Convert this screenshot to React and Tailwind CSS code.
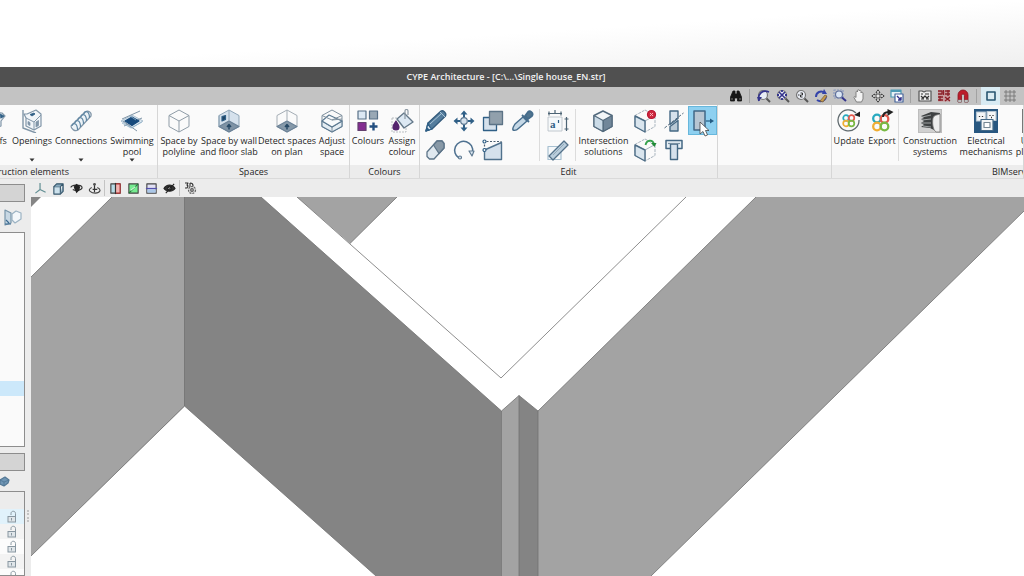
import React from "react";

const N = "#2f5f86";
const G = "#8196a8";
const L = "#d5e1ec";

function Svg({ children, className = "size-6", box = "0 0 24 24" }) {
  return (
    <svg viewBox={box} className={className + " shrink-0"} fill="none" stroke={N} strokeWidth="1.2" strokeLinejoin="round" aria-hidden="true">
      {children}
    </svg>
  );
}

/* ---------- ribbon icons ---------- */
const cube = "M12 1 22 6.500V17.500L12 23 2 17.500V6.500Z";
const cubeIn = "M2 6.500 12 12 22 6.500M12 12V23";

const Roofs = () => (
  <Svg>
    <path d="M2 8 10 3l9 1 3 3-4 5v5l-8 3-8-3Z" fill="#eef3f7" stroke={G} />
    <path d="M10 3l5 7 7-3M15 10v9" stroke={G} />
    <path d="M17 5l4 2-3 2Z" fill={N} strokeWidth=".8" />
  </Svg>
);
const Openings = () => (
  <Svg>
    <path d="M3 1v18l13 5" stroke={G} strokeWidth="1.400" />
    <path d="M4 5h3L16 1l5 4v12l-7 4-8-4V9Z" fill="#f1f5f9" stroke={G} />
    <path d="M6 9l8 4 7-7M14 13v8" stroke={G} strokeWidth="1" />
    <path d="M8 12.500v3l2 1v-3ZM16 13v5l2.500-1.500v-5Z" fill={G} stroke={G} strokeWidth=".8" />
    <path d="M10 5.500l4-1.500 1 1-3 2Z" fill={N} strokeWidth=".8" />
  </Svg>
);
const Connections = () => (
  <Svg>
    <path d="M2 17 16 3c3-2 7 0 6 4L9 21c-3 2-7-1-7-4Z" fill="#edf3f7" stroke={G} />
    {[0, 1, 2, 3, 4].map((i) => (
      <g key={i} transform={`translate(${i * 3} ${-i * 3})`}>
        <path d="M3 17c0-2 2-3 3.500-2s2 3 2 6" stroke="#5f86a3" strokeWidth="1.200" />
      </g>
    ))}
  </Svg>
);
const Pool = () => (
  <Svg>
    <path d="M1 12 12 6l11 6-11 7Z" fill="#dce8f1" stroke="#9cb4c6" strokeWidth=".8" />
    <path d="M2 10 20 2M4 17l18-8M3 12l14 10" stroke={G} strokeWidth="1" />
    <path d="M5 12l7-4 7 4-7 4.500Z" fill="#174a7c" stroke="#174a7c" />
    <path d="M10 7l6 4M2 14l9 5 11-6" stroke="#8fb1c8" strokeWidth=".8" />
  </Svg>
);
const SpacePoly = () => (
  <Svg>
    <path d={cube} fill="#fafafa" stroke="#8f9ca7" strokeWidth="1" />
    <path d={cubeIn} stroke="#8f9ca7" strokeWidth="1" />
  </Svg>
);
const SpaceWall = () => (
  <Svg>
    <path d={cube} fill={L} stroke="#8ea4b6" strokeWidth="1" />
    <path d="M12 12 22 17.500 12 23 2 17.500Z" fill="#7f93a5" stroke="#6b8297" />
    <path d="M12 1v11M2 6.500v11" stroke="#8ea4b6" strokeWidth="1" />
    <path d="M5 7.500l3.500-1v4L5 12Z" fill="#1e4466" />
    <path d="M12 20.500v-4M10 18l2-2.500 2 2.500" stroke="#284a66" strokeWidth="1.500" />
  </Svg>
);
const DetectSpace = () => (
  <Svg>
    <path d={cube} fill="#fafafa" stroke="#a4adb5" strokeWidth="1" />
    <path d="M12 12 22 17.500 12 23 2 17.500Z" fill="#8699a9" stroke="#6b8297" />
    <path d="M12 1v11" stroke="#a4adb5" strokeWidth="1" />
    <path d="M12 20.500v-4M10 18l2-2.500 2 2.500" stroke="#284a66" strokeWidth="1.500" />
  </Svg>
);
const AdjustSpace = () => (
  <Svg>
    <path d={cube} fill="#fafafa" stroke="#7f909e" strokeWidth="1" />
    <path d="M2 12l10 6 10-6v5.500L12 23 2 17.500Z" fill="#e4edf3" stroke="#5a7890" strokeWidth="1.100" />
    <path d="M2 12l7-6 13 6-10 6Z" fill="#f7fafc" stroke="#5a7890" strokeWidth="1.100" />
    <path d="M2 6.500 12 11 22 6.500M12 11l10-1M12 18v5" stroke="#7f909e" strokeWidth="1" />
  </Svg>
);
const Colours = () => (
  <Svg>
    <rect x="2" y="2" width="8" height="8" fill="#dce8f3" stroke="#587087" />
    <rect x="13.500" y="2" width="8" height="8" fill="#99a8b5" stroke="#587087" />
    <rect x="2" y="13.500" width="8" height="8" fill="#832c90" stroke="#63406f" />
    <path d="M17.500 13.500v8M13.500 17.500h8" stroke="#244f80" strokeWidth="2.400" />
  </Svg>
);
const Bucket = () => (
  <Svg>
    <path d="M2 9v14h14v-6M2 9h5" stroke="#a9b0b5" strokeWidth=".8" strokeDasharray="2 1" />
    <path d="M14 4l9 9-9 6-7-9Z" fill="#dce8f3" stroke="#647889" strokeWidth="1.400" />
    <path d="M15 10V2c0-2 3-2 3 0v4" stroke="#8b98a3" />
    <path d="M6 12c-2 3-3 4-3 6a3 3 0 0 0 6 0c0-2-1-3-3-6Z" fill="#54236d" stroke="#54236d" />
  </Svg>
);
const Pencil = () => (
  <Svg>
    <path d="M2 22l2-8L17 2c2-1 6 2 4.500 5L8 20Z" fill="#557d9d" stroke="#335a7b" strokeWidth="1.300" />
    <path d="M4 14c1 3 2 5 4 6l-6 2Z" fill="#e1ebf3" />
    <path d="M6 15 18 4M16 3l5 5" stroke="#a9c4d7" strokeWidth="1" />
    <path d="M2 22l1-3 2 2Z" fill={N} />
  </Svg>
);
const Move = () => (
  <Svg>
    <path d="M12 5v3M12 16v3M5 12h3M16 12h3" strokeWidth="2" />
    <path d="M12 1.500l3.500 4h-7ZM12 22.500l3.500-4h-7ZM1.500 12l4-3.500v7ZM22.500 12l-4-3.500v7Z" fill={N} stroke="none" />
    <circle cx="12" cy="12" r="3.300" fill={L} stroke="#5b7790" />
  </Svg>
);
const Copy = () => (
  <Svg>
    <rect x="2.500" y="8.500" width="13" height="13" fill={L} strokeWidth="1.300" />
    <rect x="8.500" y="2.500" width="13" height="13" fill="#91a0ac" stroke="#5c7386" strokeWidth="1.300" />
  </Svg>
);
const Dropper = () => (
  <Svg>
    <path d="M3 21c-1-2 1-4 2-6l8-7 4 4-8 7c-2 2-4 3-6 2Z" fill="#c5d8e6" stroke="#466d8c" strokeWidth="1.400" />
    <path d="M12 6l7 7M15 7l3-4c2-2 6 1 4 4l-4 3Z" fill="#52758f" stroke="#466d8c" strokeWidth="1.800" />
  </Svg>
);
const Eraser = () => (
  <Svg>
    <path d="M3 14 13 3h5l2 2.500V10L10 21H5.500L3 18.500Z" fill="#dfe8ef" stroke="#5d7589" strokeWidth="1.300" />
    <path d="M9.500 7 13 3h5l2 2.500V10l-5 5.500Z" fill="#8899a7" stroke="#5d7589" strokeWidth="1.300" />
  </Svg>
);
const Rotate = () => (
  <Svg>
    <path d="M7 20A9 9 0 1 1 20.500 14" stroke="#4e7190" strokeWidth="1.500" />
    <circle cx="8" cy="19.500" r="1.500" fill="#dce8f3" stroke="#5f7a91" />
    <path d="M17 13l5 0-2 5Z" fill="#dce8f3" stroke="#5f7a91" />
  </Svg>
);
const Stretch = () => (
  <Svg>
    <path d="M3.500 12v9.500h17V4.500Z" fill={L} stroke="#50718c" strokeWidth="1.400" />
    <path d="M3.500 12V3.500h17" stroke="#4b5f70" strokeDasharray="2 1.500" />
    <circle cx="3.500" cy="3.500" r="1.500" fill="#fff" />
    <circle cx="3.500" cy="12" r="1.500" fill="#fff" />
  </Svg>
);
const TextDim = () => (
  <Svg>
    <rect x="2" y="8" width="14" height="14" fill="#f6f9fb" stroke="#b5bdc4" strokeWidth=".8" />
    <path d="M2 4.500h14M3 2.500v4M15 2.500v4M9 1v3M20.500 8v14M18.500 10h4M18.500 20h4" stroke="#4d6475" strokeWidth="1.200" />
    <text x="4" y="19" fontSize="11" fontWeight="700" fontFamily="Liberation Serif, serif" fill={N} stroke="none">a</text>
    <path d="M12.500 11v3" stroke={N} />
  </Svg>
);
const Measure = () => (
  <Svg>
    <rect x="2" y="8.500" width="13" height="13" fill="#f5f8fa" stroke="#a7c0d1" />
    <path d="M3 18 18 3l4 4L7 22Z" fill="#b9cddc" stroke="#547189" strokeWidth="1.300" />
    <path d="M7 17l11-11" stroke="#8fa5b3" strokeWidth=".9" />
  </Svg>
);
const Intersection = () => (
  <Svg>
    <path d="M12 2 21 6.500v11L12 22.500 3 17.500v-11Z" fill="#f3f6f8" stroke="#536a7d" strokeWidth="1.400" />
    <path d="M12 11.500 21 6.500v11l-9 5Z" fill="#71879a" stroke="#536a7d" />
    <path d="M3 6.500l9 5v11l-9-5Z" fill="#cbdbe7" stroke="#536a7d" />
  </Svg>
);
const cubeFaint = (
  <>
    <path d={cube} fill="#fafafa" stroke="#a7b3bd" strokeWidth="1" strokeDasharray="3 1" />
    <path d={cubeIn} stroke="#a7b3bd" strokeWidth="1" />
    <path d="M2 7 12 12v11L2 17.500Z" fill="#d9e5ee" stroke="#4c6c85" strokeWidth="1.400" />
  </>
);
const CubeDelete = () => (
  <Svg>
    {cubeFaint}
    <circle cx="18.500" cy="5.500" r="4" fill="#cf2940" stroke="#b71632" />
    <path d="M17 4l3 3M20 4l-3 3" stroke="#f5b4bd" strokeWidth="1" />
  </Svg>
);
const CubeRefresh = () => (
  <Svg>
    {cubeFaint}
    <path d="M12.500 7c1-5 7-6 8.500-1" stroke="#37a24d" strokeWidth="1.800" />
    <path d="M18 5h5.500L21.500 9Z" fill="#218a38" stroke="none" />
  </Svg>
);
const Cut = () => (
  <Svg>
    <path d="M8 2h8v7.500l-8 6Z" fill={L} stroke="#446884" strokeWidth="1.400" />
    <path d="M8 17.500l8-6V22H8Z" fill="#b9c9d6" stroke="#446884" strokeWidth="1.400" />
    <path d="M2.500 19 21.500 4" stroke="#51697c" strokeWidth="1" strokeDasharray="3 1.500" />
  </Svg>
);
const Join = () => (
  <Svg>
    <path d="M4 2.500h16v8H4Z" fill="#e6eff5" stroke="#446884" strokeWidth="1.500" />
    <path d="M8.500 6h7v15.500h-7Z" fill={L} stroke="#446884" strokeWidth="1.400" />
    <path d="M6 5.500h12" stroke="#7991a3" />
  </Svg>
);
const Offset = () => (
  <Svg>
    <rect x="3" y="2" width="11" height="19" fill="#b8c6d2" stroke="#426887" strokeWidth="1.500" />
    <path d="M15 12h5" stroke="#245b82" strokeWidth="1.200" />
    <path d="M19 9.500l4 2.500-4 2.500Z" fill="#245b82" stroke="none" />
  </Svg>
);

const Update = () => (
  <Svg>
    <path d="M19 4a10.500 10.500 0 1 0 3 7" stroke="#5f696d" strokeWidth="1.300" />
    <path d="M17 6l6-3.500V8Z" fill="#222" stroke="none" />
    <g strokeWidth="1.700">
      <circle cx="9" cy="9" r="2.800" stroke="#28a9bf" />
      <circle cx="14.500" cy="9" r="2.800" stroke="#e45b4f" />
      <circle cx="9" cy="14.500" r="2.800" stroke="#f0ae32" />
      <circle cx="14.500" cy="14.500" r="2.800" stroke="#78b943" />
    </g>
  </Svg>
);
const Export = () => (
  <Svg>
    <g strokeWidth="2.300">
      <circle cx="7" cy="9.500" r="3.800" stroke="#28a9bf" />
      <circle cx="14.500" cy="10" r="3.800" stroke="#e45b4f" />
      <circle cx="7" cy="17.500" r="3.800" stroke="#f0ae32" />
      <circle cx="14.500" cy="17.500" r="3.800" stroke="#78b943" />
    </g>
    <path d="M13 8c0-4 2-5 6-5" stroke="#222" strokeWidth="2" />
    <path d="M17.500 0l6 3-6 4Z" fill="#222" stroke="none" />
  </Svg>
);
const Construction = () => (
  <Svg>
    <rect x=".5" y=".5" width="23" height="23" fill="#d0d0d0" stroke="#bdbdbd" />
    <path d="M3 7 13 3l9 1v3l-4 3v12l-6-3-9-1 3-2-3-2 3-2-3-2 3-1Z" fill="#3e4142" stroke="none" />
    <path d="M4 8l9-2M4 11l9-1M4 14h9M5 17l8 1" stroke="#a9adae" strokeWidth=".9" />
    <path d="M15 9c1-3 4-3 7-4v18h-4c-3-2-4-9-3-14Z" fill="#ededed" stroke="#777" strokeWidth=".8" />
  </Svg>
);
const Electrical = () => (
  <Svg>
    <rect width="24" height="24" fill="#285780" stroke="none" />
    <rect x="2.500" y="3" width="9" height="9" fill="#f4f6f7" stroke="#b7c7d3" />
    <rect x="13" y="2.500" width="9" height="9" fill="#f4f6f7" stroke="#b7c7d3" />
    <rect x="7" y="10.500" width="12" height="11" fill="#f4f6f7" stroke="#436987" />
    <rect x="10" y="13.500" width="6" height="5" stroke="#778894" fill="#fff" />
    <path d="M5.500 7v1M8.500 7v1M16 6v1M19 6v1M17 8.500h1" stroke="#333" strokeWidth="1.300" />
  </Svg>
);
const Plumbing = () => (
  <Svg>
    <rect x=".5" y=".5" width="23" height="23" fill="#8f9498" stroke="#777" />
    <path d="M3 20 10 4h10" stroke="#555" strokeWidth="3" />
  </Svg>
);

/* ---------- ribbon parts ---------- */
function Tool({ icon, label, width, caret }) {
  return (
    <button type="button" className={"flex shrink-0 flex-col items-center pt-1 " + width}>
      {icon}
      <span className="mt-0.5 block h-[22px] text-center whitespace-pre">{label}</span>
      {caret && (
        <svg viewBox="0 0 6 4" className="mt-px h-1 w-1.5" aria-hidden="true">
          <path d="M.5.500h5L3 3.500Z" fill="#333" />
        </svg>
      )}
    </button>
  );
}

function Group({ title, width, align = "", titleAlign = "justify-center", children }) {
  return (
    <section aria-label={title} className={"flex flex-col overflow-hidden border-r border-[#d6d6d6] " + width}>
      <div className={"flex h-[60px] " + align}>{children}</div>
      <h2 className={"flex h-[13px] items-center bg-[#ececec] whitespace-nowrap " + titleAlign}>{title}</h2>
    </section>
  );
}

function Small({ label, children }) {
  return (
    <button type="button" aria-label={label} className="flex size-[29px] items-center justify-center">
      {children}
    </button>
  );
}

const Rule = () => <div className="my-1 w-px shrink-0 bg-[#dcdcdc]" />;

/* ---------- quick-access bar ---------- */
const K = "#303030";
const B = "#34348c";
const lens = (
  <>
    <circle cx="6" cy="6" r="4.500" fill="#e9edf5" stroke="#777" />
    <path d="M9.500 9.500 13 13" stroke="#555" strokeWidth="2" />
  </>
);
const quick = [
  ["Find", <><path d="M1.500 8 4 2h2v3h2V2h2l2.500 6v4H8.500V9h-3v3h-4Z" fill="#171717" stroke="#171717" strokeWidth=".8" /><path d="M3 9.500v1M11 9.500v1" stroke="#bbb" /></>],
  null,
  ["Previous view", <>{lens}<path d="M2 12C0 6 5 0 12 3" stroke={B} strokeWidth="1.800" /><path d="M0 8l5 0-3 4Z" fill={B} stroke="none" /></>],
  ["Zoom extents", <>{lens}<path d="M3 3l6 6M9 3 3 9" stroke={B} strokeWidth="1.600" /><path d="M6 1v2M6 9v2M1 6h2M9 6h2" stroke={B} strokeWidth="1.800" /></>],
  ["Zoom x2", <>{lens}<path d="M3 6h1.500M5.500 4h2v2h-2v2h2" stroke={K} strokeWidth="1" /></>],
  ["Redraw", <><path d="M2 8c0-5 5-7 9-4M12 7c0 4-5 7-9 4" stroke="#3444aa" strokeWidth="2" /><path d="M10 0l3 5H8Z" fill="#3444aa" stroke="none" /><path d="M6 12l5-6 2 1-4 6Z" fill="#c69a4e" stroke="#755a35" strokeWidth=".7" /></>],
  ["Zoom window", <><path d="M1 1h9v8H1Z" stroke="#8b9bc0" strokeDasharray="2 1" /><circle cx="6" cy="5.500" r="3.500" fill="#dbe6f4" stroke="#60709c" /><path d="M9 8.500l4 3.500" stroke={B} strokeWidth="2" /></>],
  ["Pan", <path d="M4.500 13 2 8.500c0-1.500 1-1 2 0V3c0-1 1.500-1 1.500 0V1.500c0-1 1.800-1 1.800 0V2c0-1 1.700-1 1.700.500V4c0-1 2-1 2 0v6l-1.500 3Z" fill="#f3f3f3" stroke="#777" strokeWidth=".9" />],
  ["Orbit", <path d="M7 .8 9 3.500H8V6h2.500V5l2.700 2-2.700 2V8H8v2.500h1L7 13.200 5 10.500h1V8H3.500v1L.8 7l2.700-2v1H6V3.500H5Z" fill="#e8e8e8" stroke="#444" strokeWidth="1" />],
  ["Windows", <><rect x="1" y="1" width="10" height="7" fill="#e6f1f5" stroke="#4d9ab4" /><path d="M1 2h10" stroke="#4d9ab4" strokeWidth="2" /><rect x="5" y="5" width="8" height="8" fill="#fff" stroke="#46659b" /><path d="M7 7l4 4M8 11h3V8" stroke={B} strokeWidth="1.400" /></>],
  null,
  ["Template DXF", <><path d="M1 2h3l2 1 2-1h5v10H1Z" fill="#ececec" stroke="#555" /><path d="M3 5h2M7 5h4M3 7l2 2 2-2 2 2 2-2M3 10h3M8 10h3" stroke={K} /></>],
  ["Layers", <><path d="M1 1.500h12v11H1Z" fill="#c79a9d" stroke="none" /><path d="M1 2h4v3H1M6.500 1v5M8 2h5M8 5h5M1 8h5M1 11h5M3 7v5M8 8l5 4M8 12l5-4M11 1v6" stroke="#8c2029" strokeWidth="1.300" /></>],
  ["Object snap", <><path d="M2 13V6a5 5 0 0 1 10 0v7H8.500V6.500a1.500 1.500 0 0 0-3 0V13Z" fill="#bd1c2b" stroke="#8a1722" strokeWidth=".8" /><path d="M2 11h3.500v2H2ZM8.500 11H12v2H8.500Z" fill="#ddd" stroke="#777" strokeWidth=".6" /></>],
  null,
  ["Ortho", <rect x="3" y="3" width="8" height="8" stroke="#265571" strokeWidth="1.600" />, true],
  ["Grid", <path d="M3 1v12M7 1v12M11 1v12M1 3h12M1 7h12M1 11h12" stroke="#777" strokeWidth=".9" />],
];

/* ---------- view bar ---------- */
const boxIcon = (fillA, fillB) => (
  <>
    <rect x="2" y="2" width="10" height="10" fill={fillA} stroke="#444" />
    {fillB}
  </>
);
const views = [
  ["Axes", <path d="M6.500 1v7L1.500 12M6.500 8l6 3" stroke="#628f94" strokeWidth="1.300" />],
  ["Perspective", <><path d="M2 5h7v8H2Z" fill="#cce1ec" stroke="#34556a" strokeWidth="1.200" /><path d="M2 5l3-3h7L9 5M12 2v8l-3 3" fill="#89aabe" stroke="#34556a" strokeWidth="1.200" /></>],
  ["Orbit view", <><path d="M1 6c0-3 12-4 12 0 0 3-7 4-10 2" stroke="#333" strokeWidth="1.200" /><path d="M4 5l3-3 4 3-1 4-3 3-2-4Z" fill="#222" stroke="none" /></>],
  ["Turn view", <><path d="M4 6c-6 3 0 6 4 6 5 0 7-4 2-6" stroke="#444" strokeWidth="1.200" /><path d="M7 2v9M5 8h5" stroke="#333" strokeWidth="1.300" /><circle cx="7" cy="2.500" r="1.500" fill="#555" stroke="none" /></>],
  null,
  ["Vertical section", boxIcon("#b5dce7", <><path d="M7 2h5v10H7Z" fill="#f2b5b2" stroke="#a62c2d" /><path d="M7 1v12" stroke="#333" /></>)],
  ["Oblique section", boxIcon("#76ec91", <><path d="M2 12 12 2" stroke="#227d3a" /><path d="M4 9l5-4" stroke="#d9ffdf" /></>)],
  ["Horizontal section", boxIcon("#e1e0f4", <><path d="M2.500 8h9v3.500h-9Z" fill="#aac7e7" stroke="none" /><path d="M1 7h12" stroke="#5450ad" strokeWidth="1.300" /></>)],
  ["Visibility", <><path d="M1 7c3-5 9-5 12 0-3 4-9 4-12 0Z" fill="#333" stroke="#222" /><circle cx="7" cy="7" r="1.800" fill="#eee" stroke="#111" /><path d="M3 12 12 2" stroke="#222" strokeWidth="1.200" /></>],
  null,
  ["3D settings", <><path d="M2 2h3L4 4l1 1-1 2H2M7 2v5c4 0 4-5 0-5" stroke="#333" strokeWidth="1.100" /><circle cx="9" cy="9" r="3.500" fill="#ddd" stroke="#666" strokeDasharray="2 1" /><circle cx="9" cy="9" r="1.300" stroke="#555" /></>],
];

function Lock() {
  return (
    <svg viewBox="0 0 12 13" className="h-[13px] w-3" fill="none" stroke="#8997a1" aria-hidden="true">
      <rect x="2" y="6.500" width="7.500" height="5.500" fill="#dfe5e9" />
      <path d="M5 5V3.500c0-3 4.500-3 4.500 0v4M5.500 8v2.500" />
    </svg>
  );
}

function Model() {
  return (
    <svg viewBox="31 197 993 379" preserveAspectRatio="xMinYMin slice" className="block size-full" role="img" aria-label="3D view of the walls">
      <rect x="31" y="197" width="993" height="379" fill="#fff" />
      <path d="M31 197h10L31 207Z" fill="#858585" />
      <path d="M112 197h73v209L31 556V277Z" fill="#a3a3a3" />
      <path d="M184.500 197H261L501.500 411v165H376L184.500 406Z" fill="#848484" />
      <path d="M501.500 411 519 395.500V576h-17.500Z" fill="#a3a3a3" />
      <path d="M519 395.500 538 411v165h-19Z" fill="#848484" />
      <path d="M538 411 756 197h268v14L651 576H538Z" fill="#a3a3a3" />
      <path d="M297 197h100l-47 46.500Z" fill="#a3a3a3" />
      <g fill="none" stroke="#717171" strokeWidth=".8">
        <path d="M112 197 31 277M31 556 184.500 406 376 576M184.500 197v209" />
        <path d="M261 197 501.500 411 519 395.500 538 411 756 197M1024 211 651 576" />
        <path d="M501.500 411v165M519 395.500V576M538 411v165" />
        <path d="M297 197 501 378 686 197M397 197l-47 46.500" />
      </g>
    </svg>
  );
}

export default function App() {
  return (
    <div className="flex h-screen flex-col overflow-hidden bg-white font-['Open_Sans','Noto_Sans',sans-serif] text-[9px] leading-[11px] text-[#262626]">
      <div className="h-[67px] shrink-0 bg-linear-to-br from-white from-50% to-[#efefef]" />
      <header className="flex h-5 shrink-0 items-center justify-center bg-[#505050] pr-3 pb-0.5">
        <h1 className="font-semibold text-[#f2f2f2]">CYPE Architecture - [C:\...\Single house_EN.str]</h1>
      </header>

      <nav aria-label="Quick access" className="flex h-[18px] shrink-0 items-center justify-end bg-[#c3c3c3] pr-[5px]">
        {quick.map((q, i) =>
          q ? (
            <button key={i} type="button" aria-label={q[0]} className={"flex h-[18px] w-[19px] items-center justify-center " + (q[2] ? "bg-[#d9ebf3]" : "")}>
              <Svg box="0 0 14 14" className="size-3.5">{q[1]}</Svg>
            </button>
          ) : (
            <div key={i} className="mx-1 h-3.5 w-px bg-[#a2a2a2]" />
          )
        )}
      </nav>

      <div className="flex h-[73px] shrink-0 overflow-hidden bg-[#fafafa]">
        <Group title="Construction elements" width="w-[158px] shrink-0" align="justify-end" titleAlign="justify-end pr-[88px]">
          <Tool icon={<Roofs />} label="Roofs" width="w-7" />
          <Tool icon={<Openings />} label="Openings" width="w-[46px]" caret />
          <Tool icon={<Connections />} label="Connections" width="w-[52px]" caret />
          <Tool icon={<Pool />} label={"Swimming\npool"} width="w-[50px]" caret />
        </Group>
        <Group title="Spaces" width="w-48 shrink-0">
          <Tool icon={<SpacePoly />} label={"Space by\npolyline"} width="w-[42px]" />
          <Tool icon={<SpaceWall />} label={"Space by wall\nand floor slab"} width="w-[58px]" />
          <Tool icon={<DetectSpace />} label={"Detect spaces\non plan"} width="w-[58px]" />
          <Tool icon={<AdjustSpace />} label={"Adjust\nspace"} width="w-8" />
        </Group>
        <Group title="Colours" width="w-[70px] shrink-0">
          <Tool icon={<Colours />} label="Colours" width="w-9" />
          <Tool icon={<Bucket />} label={"Assign\ncolour"} width="w-8" />
        </Group>
        <Group title="Edit" width="w-[298px] shrink-0">
          <div className="grid grid-cols-4 content-start pt-px pl-px">
            <Small label="Edit"><Pencil /></Small>
            <Small label="Move"><Move /></Small>
            <Small label="Copy"><Copy /></Small>
            <Small label="Match properties"><Dropper /></Small>
            <Small label="Delete"><Eraser /></Small>
            <Small label="Rotate"><Rotate /></Small>
            <Small label="Stretch"><Stretch /></Small>
          </div>
          <div className="mx-[3px] flex"><Rule /></div>
          <div className="mr-[3px] grid content-start pt-px">
            <Small label="Text and dimensions"><TextDim /></Small>
            <Small label="Measure"><Measure /></Small>
          </div>
          <Rule />
          <Tool icon={<Intersection />} label={"Intersection\nsolutions"} width="w-[54px]" />
          <div className="grid grid-cols-3 content-start pt-px">
            <Small label="Delete solution"><CubeDelete /></Small>
            <Small label="Cut"><Cut /></Small>
            <div className="relative border border-[#67b7dc] bg-[#8ed0f0]">
              <button type="button" aria-label="Offset" className="flex size-full items-center justify-center"><Offset /></button>
              <svg viewBox="0 0 11 16" className="pointer-events-none absolute top-[14px] left-[10px] h-4 w-[11px]" aria-hidden="true">
                <path d="M1 1v12l3-2.500L6 15l2.500-1-2-4.500H10Z" fill="#fff" stroke="#444" strokeWidth=".8" />
              </svg>
            </div>
            <Small label="Update solution"><CubeRefresh /></Small>
            <Small label="Join"><Join /></Small>
          </div>
        </Group>
        <Group width="min-w-0 flex-1" />
        <Group title="BIMserver.center" width="w-48 shrink-0" titleAlign="justify-start pl-40">
          <Tool icon={<Update />} label="Update" width="w-[34px]" />
          <Tool icon={<Export />} label="Export" width="w-8" />
          <Rule />
          <Tool icon={<Construction />} label={"Construction\nsystems"} width="w-[62px]" />
          <Tool icon={<Electrical />} label={"Electrical\nmechanisms"} width="w-[50px]" />
          <Tool icon={<Plumbing />} label={"Urban\nplanning"} width="w-[46px]" />
        </Group>
      </div>

      <main className="flex min-h-0 flex-1 bg-[#ececec]">
        <aside className="flex w-[31px] shrink-0 overflow-hidden border-t border-[#dadada]">
          <div className="flex w-[25px] flex-col pt-[5px]">
            <div className="h-[18px] shrink-0 border border-l-0 border-[#8d8d8d] bg-[#d4d4d4]" />
            <button type="button" aria-label="Show in view" className="flex h-[30px] shrink-0 items-center justify-center">
              <Svg box="0 0 18 18" className="size-[18px]">
                <path d="M1 2l6 3v10l-6 2Z" fill="#c8d8e4" stroke="#7895aa" />
                <path d="M8 6l4-3 5 2v6l-6 4-3-3Z" fill="#f3f7fa" stroke="#9cb3c3" />
                <path d="M1 16h6M2 12l3 3" stroke="#3a6a91" />
              </Svg>
            </button>
            <ul aria-label="Levels" className="h-[215px] shrink-0 border border-l-0 border-[#8d8d8d] bg-[#fafafa] pt-[148px]">
              <li className="h-[15px] bg-[#cce8fa]" />
            </ul>
            <div className="mt-1.5 h-[18px] shrink-0 border border-l-0 border-[#8d8d8d] bg-[#d4d4d4]" />
            <button type="button" aria-label="Layer view" className="flex h-5 shrink-0 items-center">
              <Svg box="0 0 10 12" className="h-3 w-2.5">
                <path d="M0 5l5-3 4 3-1 3-4 3-4-2Z" fill="#6f95b4" stroke="#537895" />
                <path d="M0 5l4 2 5-2M4 7v4" stroke="#4d7392" strokeWidth=".8" />
              </Svg>
            </button>
            <div className="flex-1 overflow-hidden border border-l-0 border-[#8d8d8d] bg-white">
              <table aria-label="Layers" className="w-full border-collapse">
                <thead>
                  <tr className="h-[17px] bg-[#ececec]"><th aria-label="Lock" /></tr>
                </thead>
                <tbody>
                  {[0, 1, 2, 3, 4].map((r) => (
                    <tr key={r} className={"h-[15px] " + (r === 0 ? "bg-[#e1f2fb]" : r % 2 ? "bg-[#f3f3f3]" : "bg-[#fcfcfc]")}>
                      <td className="p-0">
                        <button type="button" aria-label={`Lock layer ${r + 1}`} className="flex w-full justify-center"><Lock /></button>
                      </td>
                    </tr>
                  ))}
                </tbody>
              </table>
            </div>
          </div>
          <div className="flex flex-1 items-end justify-center pb-[54px]">
            <div className="h-3 border-l-2 border-dotted border-[#c3c3c3]" />
          </div>
        </aside>

        <section className="flex min-w-0 flex-1 flex-col">
          <nav aria-label="View tools" className="flex h-[19px] shrink-0 items-center border-t border-[#dadada]">
            {views.map((v, i) =>
              v ? (
                <button key={i} type="button" aria-label={v[0]} className="flex h-[18px] w-[18px] items-center justify-center">
                  <Svg box="0 0 14 14" className={v[0] === "3D settings" ? "size-3.5" : "size-[13px]"}>{v[1]}</Svg>
                </button>
              ) : (
                <div key={i} className="mx-px h-4 w-px bg-[#c4c4c4]" />
              )
            )}
          </nav>
          <div className="min-h-0 flex-1 overflow-hidden">
            <Model />
          </div>
        </section>
      </main>
    </div>
  );
}
